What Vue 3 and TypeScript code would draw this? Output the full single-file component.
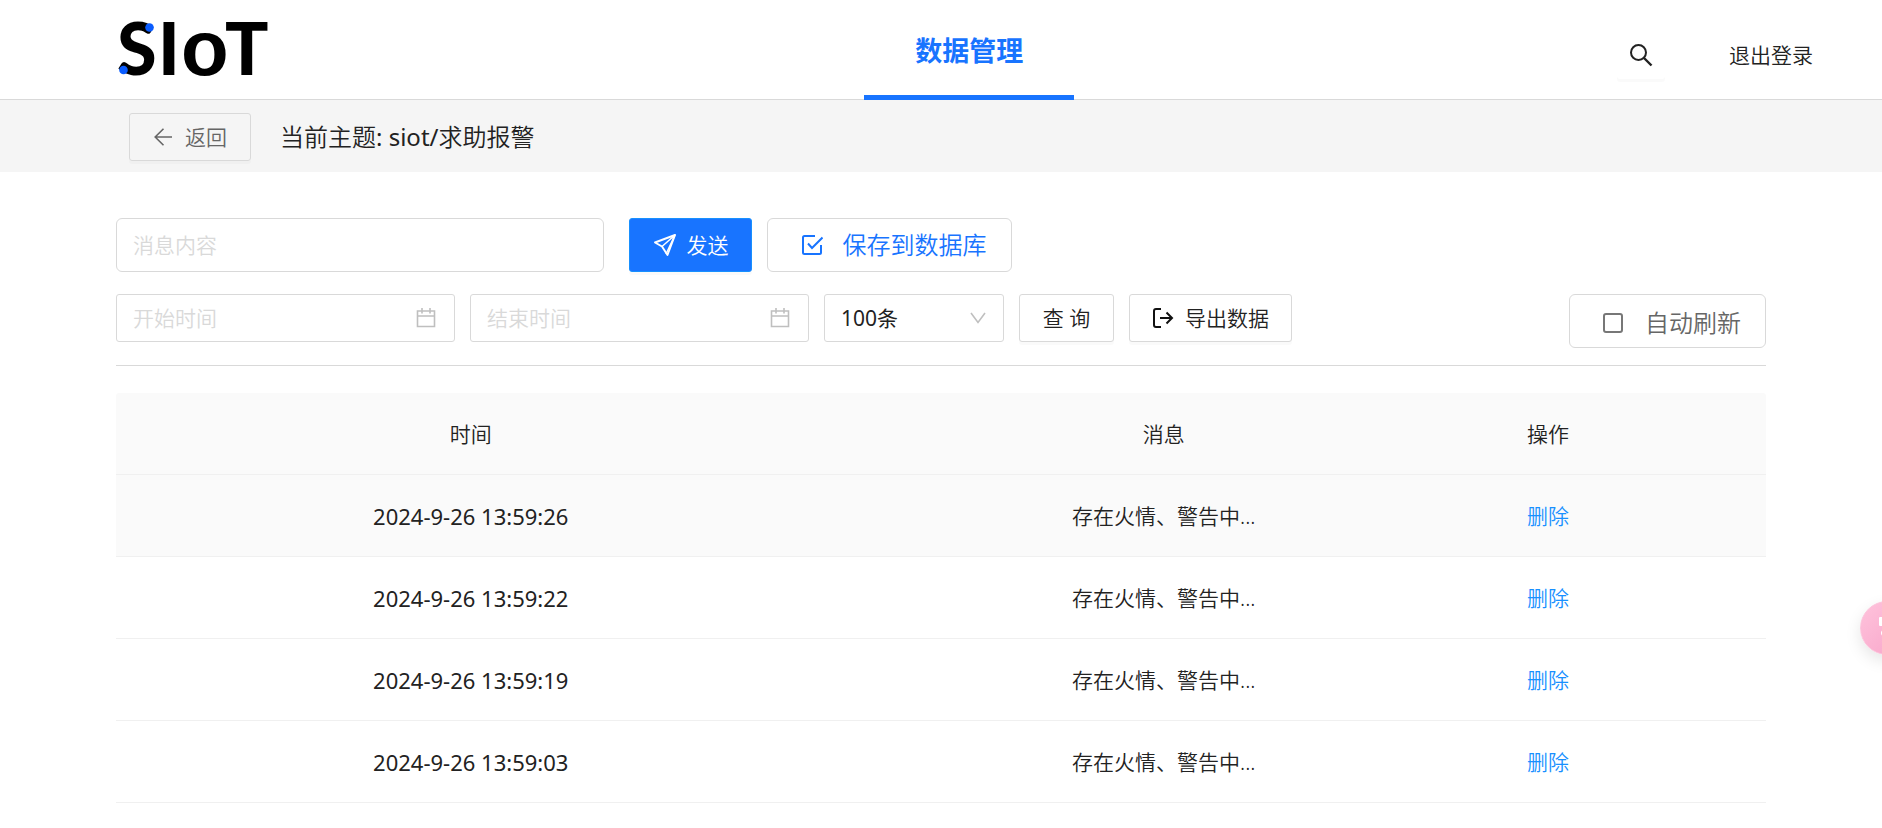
<script setup lang="ts">
import { ref } from 'vue'

interface Message {
  time: string
  content: string
}

const topicRoot = ref('siot/')
const topicName = ref('求助报警')
const draft = ref('')
const startTime = ref('')
const endTime = ref('')
const limit = ref(100)
const limits = [100, 200, 500]
const autoRefresh = ref(false)
const active = ref(0)

const messages = ref<Message[]>([
  { time: '2024-9-26 13:59:26', content: '存在火情、警告中...' },
  { time: '2024-9-26 13:59:22', content: '存在火情、警告中...' },
  { time: '2024-9-26 13:59:19', content: '存在火情、警告中...' },
  { time: '2024-9-26 13:59:03', content: '存在火情、警告中...' },
])

function remove(index: number): void {
  messages.value.splice(index, 1)
}
</script>

<template>
  <div class="page">
    <header class="header">
      <a class="logo" href="#" aria-label="SIoT">
        <svg width="160" height="99" viewBox="0 0 160 99">
          <text class="logo-text" y="75">
            <tspan x="-1">S</tspan><tspan x="40">I</tspan><tspan class="logo-round" x="63">o</tspan><tspan x="107">T</tspan>
          </text>
          <circle cx="31.500" cy="27.500" r="4.300" fill="#0a5cff" />
          <circle cx="5.500" cy="70" r="4.300" fill="#0a5cff" />
        </svg>
      </a>
      <nav class="nav">
        <a class="tab" href="#">数据管理</a>
      </nav>
      <div class="tools">
        <button class="search" type="button" aria-label="搜索">
          <svg width="24" height="24" viewBox="0 0 24 24" fill="none" stroke="#222" stroke-width="2">
            <circle cx="9.500" cy="9.500" r="7.500" />
            <path d="M15 15l7.500 7.500" stroke-width="2.400" />
          </svg>
        </button>
        <a class="logout" href="#">退出登录</a>
      </div>
    </header>

    <div class="topic-bar">
      <button class="btn back" type="button">
        <svg width="20" height="20" viewBox="0 0 20 20" fill="none" stroke="#666" stroke-width="1.600">
          <path d="M19 10H2.500M10.500 1.800L2.200 10l8.300 8.200" />
        </svg>
        <span>返回</span>
      </button>
      <h1 class="topic">当前主题<span class="latin">: {{ topicRoot }}</span>{{ topicName }}</h1>
    </div>

    <main class="main">
      <form class="row" @submit.prevent>
        <input v-model="draft" class="field message" type="text" placeholder="消息内容" aria-label="消息内容" />
        <button class="btn send" type="submit">
          <svg width="24" height="24" viewBox="0 0 24 24" fill="none" stroke="#fff" stroke-width="1.900" stroke-linejoin="round">
            <path d="M22 2L2 9.500l7 4L14.500 22z" />
            <path d="M22 2L9 13.500M22 2L13 21" stroke-width="1.500" />
          </svg>
          <span>发送</span>
        </button>
        <button class="btn save" type="button">
          <svg width="22" height="22" viewBox="0 0 22 22" fill="none" stroke="#1874ff" stroke-width="2">
            <path d="M14 2H3.500A1.500 1.500 0 0 0 2 3.500v15A1.500 1.500 0 0 0 3.500 20h15a1.500 1.500 0 0 0 1.500-1.500V11" />
            <path d="M7 9.500l4 4.500L21.500 3.500" />
          </svg>
          <span>保存到数据库</span>
        </button>
      </form>

      <div class="row filters">
        <label class="picker">
          <input v-model="startTime" class="field" type="text" placeholder="开始时间" aria-label="开始时间" />
          <svg class="picker-icon" width="20" height="20" viewBox="0 0 20 20" fill="none" stroke="#bfbfbf" stroke-width="1.600">
            <path d="M1.500 3h17v15.500h-17zM1.500 8h17M6 0v5.500M14 0v5.500" />
          </svg>
        </label>
        <label class="picker">
          <input v-model="endTime" class="field" type="text" placeholder="结束时间" aria-label="结束时间" />
          <svg class="picker-icon" width="20" height="20" viewBox="0 0 20 20" fill="none" stroke="#bfbfbf" stroke-width="1.600">
            <path d="M1.500 3h17v15.500h-17zM1.500 8h17M6 0v5.500M14 0v5.500" />
          </svg>
        </label>
        <label class="limit">
          <select v-model="limit" class="field latin" aria-label="条数">
            <option v-for="n in limits" :key="n" :value="n">{{ n }}条</option>
          </select>
          <svg class="limit-icon" width="16" height="12" viewBox="0 0 16 12" fill="none" stroke="#bfbfbf" stroke-width="1.600">
            <path d="M1 1l7 9.500L15 1" />
          </svg>
        </label>
        <button class="btn query" type="button">查 询</button>
        <button class="btn export" type="button">
          <svg width="22" height="22" viewBox="0 0 22 22" fill="none" stroke="#111" stroke-width="2">
            <path d="M9 2H4a2 2 0 0 0-2 2v14a2 2 0 0 0 2 2h5M8 11h12M14.500 5.500L20 11l-5.500 5.500" />
          </svg>
          <span>导出数据</span>
        </button>
        <label class="auto">
          <input v-model="autoRefresh" type="checkbox" />
          <span>自动刷新</span>
        </label>
      </div>

      <table class="table">
        <colgroup>
          <col class="col-time" />
          <col class="col-message" />
          <col />
        </colgroup>
        <thead>
          <tr>
            <th scope="col">时间</th>
            <th scope="col">消息</th>
            <th scope="col" class="action">操作</th>
          </tr>
        </thead>
        <tbody>
          <tr v-for="(m, i) in messages" :key="m.time" :class="{ active: i === active }" @mouseenter="active = i">
            <td class="time">{{ m.time }}</td>
            <td>{{ m.content }}</td>
            <td class="action"><a href="#" @click.prevent="remove(i)">删除</a></td>
          </tr>
        </tbody>
      </table>
    </main>

    <button class="floating" type="button" aria-label="助手">
      <svg width="24" height="24" viewBox="0 0 24 24" fill="#fff">
        <rect x="4" y="1" width="16" height="9" rx="1" />
        <circle cx="9" cy="17" r="3" />
        <circle cx="17" cy="17" r="3" />
      </svg>
    </button>
  </div>
</template>

<style>
body {
  margin: 0;
  background: #fff;
}
</style>

<style scoped>
.page {
  color: #222;
  font-family: "Noto Sans", "Noto Sans CJK SC", sans-serif;
  font-size: 21px;
  font-weight: 350;
  line-height: 32px;
}

.page *,
.page *::before {
  box-sizing: border-box;
}

button,
input,
select {
  margin: 0;
  color: inherit;
  font: inherit;
}

a {
  color: inherit;
  text-decoration: none;
}

svg {
  display: block;
  flex: none;
}

.latin {
  font-weight: 400;
}

.header {
  display: grid;
  grid-template-columns: 46fr 210px 43fr;
  height: 100px;
  box-shadow: inset 0 -1px #d9d9d9;
}

.logo {
  justify-self: start;
  padding-left: 118px;
}

.logo-text {
  fill: #000;
  font-family: Lato, sans-serif;
  font-size: 72px;
  font-weight: 900;
}

.logo-round {
  font-family: "Liberation Sans", sans-serif;
  font-size: 78px;
  font-weight: 700;
}

.tab {
  display: block;
  height: 100px;
  padding-top: 35px;
  border-bottom: 5px solid #1874ff;
  color: #1874ff;
  font-size: 27px;
  font-weight: 700;
  text-align: center;
}

.tools {
  display: flex;
  align-items: center;
  justify-content: flex-end;
  gap: 64px;
  padding: 9px 69px 0 0;
}

.search {
  display: flex;
  align-items: center;
  justify-content: center;
  width: 48px;
  height: 48px;
  border: 0;
  border-radius: 3px;
  background: #fff;
  box-shadow: 0 3px rgba(0, 0, 0, 0.02);
}

.topic-bar {
  display: flex;
  align-items: center;
  gap: 29px;
  height: 72px;
  padding: 2px 128px 0 129px;
  background: #f5f5f5;
}

.topic {
  margin: 0;
  font-size: 24px;
  font-weight: inherit;
}

.btn {
  display: flex;
  align-items: center;
  justify-content: center;
  height: 48px;
  padding: 0 22px;
  border: 1px solid #d9d9d9;
  border-radius: 3px;
  background: #fff;
  box-shadow: 0 3px rgba(0, 0, 0, 0.02);
  white-space: nowrap;
}

.back {
  gap: 12px;
  width: 122px;
  background: transparent;
  color: #666;
}

.main {
  padding: 46px 116px 24px;
}

.row {
  display: flex;
  gap: 15px;
}

.field {
  width: 100%;
  height: 48px;
  padding: 0 16px;
  border: 1px solid #d9d9d9;
  border-radius: 3px;
  outline: 0;
  background: #fff;
}

.field::placeholder {
  color: #d9d9d9;
  opacity: 1;
}

.message {
  width: 488px;
  height: 54px;
  margin-right: 10px;
  border-radius: 6px;
}

.send {
  gap: 10px;
  width: 123px;
  height: 54px;
  border-color: #1890ff;
  background: #1874ff;
  color: #fff;
}

.save {
  gap: 20px;
  width: 245px;
  height: 54px;
  padding: 0 24px 0 32px;
  border-radius: 6px;
  box-shadow: none;
  color: #1874ff;
  font-size: 24px;
}

.filters {
  margin-top: 22px;
  padding-bottom: 17px;
  border-bottom: 1px solid #d9d9d9;
}

.picker {
  position: relative;
  width: 339px;
}

.picker-icon {
  position: absolute;
  top: 14px;
  right: 19px;
}

.limit {
  position: relative;
  width: 180px;
}

.limit select {
  appearance: none;
}

.limit-icon {
  position: absolute;
  top: 18px;
  right: 18px;
  pointer-events: none;
}

.query {
  width: 95px;
}

.export {
  gap: 11px;
  width: 163px;
}

.auto {
  display: flex;
  align-items: center;
  gap: 22px;
  width: 197px;
  height: 54px;
  margin-left: auto;
  padding: 3px 24px 0 33px;
  border: 1px solid #d9d9d9;
  border-radius: 6px;
  color: #666;
  font-size: 24px;
  white-space: nowrap;
}

.auto input {
  flex: none;
  width: 20px;
  height: 20px;
  border: 2px solid #777;
  border-radius: 3px;
  appearance: none;
}

.auto input:checked {
  background: #777;
}

.table {
  width: 100%;
  margin-top: 27px;
  border-spacing: 0;
  table-layout: fixed;
}

.col-time {
  width: 43%;
}

.col-message {
  width: 41%;
}

.table th,
.table td {
  height: 82px;
  padding: 0;
  border-bottom: 1px solid #f0f0f0;
  font-weight: inherit;
  text-align: center;
}

.table th {
  background: #fafafa;
}

.table th:first-child {
  border-top-left-radius: 3px;
}

.table th:last-child {
  border-top-right-radius: 3px;
}

.table .active td {
  background: #fafafa;
}

.table .time {
  font-size: 22px;
  font-weight: 400;
}

.table .action {
  padding-right: 172px;
}

.table .action a {
  color: #1890ff;
}

.floating {
  position: fixed;
  top: 601px;
  right: -32px;
  display: flex;
  align-items: center;
  justify-content: center;
  width: 54px;
  height: 54px;
  padding: 0;
  border: 1px solid #fbc6dc;
  border-radius: 50%;
  background: linear-gradient(135deg, #ffc3dc, #f7a3c8);
  box-shadow: 0 6px 16px rgba(0, 0, 0, 0.1);
}
</style>
